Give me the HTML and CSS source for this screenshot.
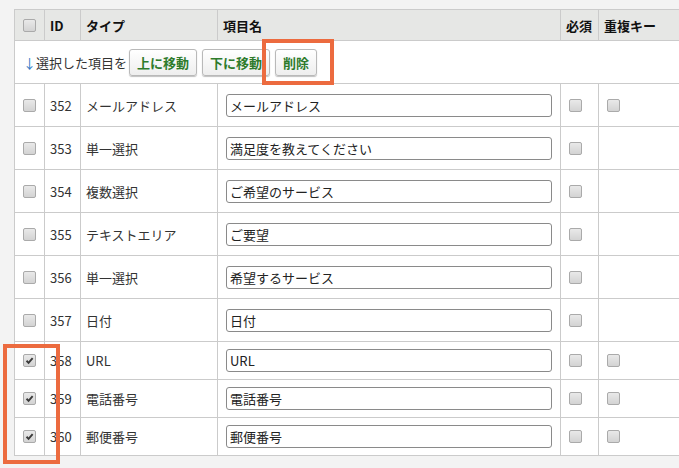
FILE: index.html
```html
<!DOCTYPE html>
<html>
    <head>
        <meta charset="utf-8">
        <title>項目一覧</title>
        <link rel="stylesheet" href="styles.css">
    </head>
    <body>
        <div id="page">
            <table id="items">
                <colgroup>
                    <col class="c-check">
                    <col class="c-id">
                    <col class="c-type">
                    <col class="c-name">
                    <col class="c-req">
                    <col class="c-dup">
                </colgroup>
                <thead>
                    <tr>
                        <th class="cell-check"><span class="cb"></span></th>
                        <th>ID</th>
                        <th>タイプ</th>
                        <th>項目名</th>
                        <th>必須</th>
                        <th>重複キー</th>
                    </tr>
                </thead>
                <tbody>
                    <tr class="toolbar">
                        <td colspan="6">
                            <div class="actions">
                                <span class="hint"><span class="arrow">↓</span>選択した項目を</span>
                                <button class="btn">上に移動</button>
                                <button class="btn">下に移動</button>
                                <button class="btn">削除</button>
                            </div>
                        </td>
                    </tr>
                    <tr>
                        <td class="cell-check"><span class="cb"></span></td>
                        <td>352</td>
                        <td>メールアドレス</td>
                        <td class="cell-name"><input class="name" type="text" value="メールアドレス"></td>
                        <td class="cell-check"><span class="cb"></span></td>
                        <td class="cell-check"><span class="cb"></span></td>
                    </tr>
                    <tr>
                        <td class="cell-check"><span class="cb"></span></td>
                        <td>353</td>
                        <td>単一選択</td>
                        <td class="cell-name"><input class="name" type="text" value="満足度を教えてください"></td>
                        <td class="cell-check"><span class="cb"></span></td>
                        <td></td>
                    </tr>
                    <tr>
                        <td class="cell-check"><span class="cb"></span></td>
                        <td>354</td>
                        <td>複数選択</td>
                        <td class="cell-name"><input class="name" type="text" value="ご希望のサービス"></td>
                        <td class="cell-check"><span class="cb"></span></td>
                        <td></td>
                    </tr>
                    <tr>
                        <td class="cell-check"><span class="cb"></span></td>
                        <td>355</td>
                        <td>テキストエリア</td>
                        <td class="cell-name"><input class="name" type="text" value="ご要望"></td>
                        <td class="cell-check"><span class="cb"></span></td>
                        <td></td>
                    </tr>
                    <tr>
                        <td class="cell-check"><span class="cb"></span></td>
                        <td>356</td>
                        <td>単一選択</td>
                        <td class="cell-name"><input class="name" type="text" value="希望するサービス"></td>
                        <td class="cell-check"><span class="cb"></span></td>
                        <td></td>
                    </tr>
                    <tr>
                        <td class="cell-check"><span class="cb"></span></td>
                        <td>357</td>
                        <td>日付</td>
                        <td class="cell-name"><input class="name" type="text" value="日付"></td>
                        <td class="cell-check"><span class="cb"></span></td>
                        <td></td>
                    </tr>
                    <tr class="short">
                        <td class="cell-check"><span class="cb checked"><svg viewBox="0 0 13 13"><path d="M3 6.8 L5.4 9.3 L10.2 3.6" /></svg></span></td>
                        <td>358</td>
                        <td>URL</td>
                        <td class="cell-name"><input class="name" type="text" value="URL"></td>
                        <td class="cell-check"><span class="cb"></span></td>
                        <td class="cell-check"><span class="cb"></span></td>
                    </tr>
                    <tr class="short">
                        <td class="cell-check"><span class="cb checked"><svg viewBox="0 0 13 13"><path d="M3 6.8 L5.4 9.3 L10.2 3.6" /></svg></span></td>
                        <td>359</td>
                        <td>電話番号</td>
                        <td class="cell-name"><input class="name" type="text" value="電話番号"></td>
                        <td class="cell-check"><span class="cb"></span></td>
                        <td class="cell-check"><span class="cb"></span></td>
                    </tr>
                    <tr class="short">
                        <td class="cell-check"><span class="cb checked"><svg viewBox="0 0 13 13"><path d="M3 6.8 L5.4 9.3 L10.2 3.6" /></svg></span></td>
                        <td>360</td>
                        <td>郵便番号</td>
                        <td class="cell-name"><input class="name" type="text" value="郵便番号"></td>
                        <td class="cell-check"><span class="cb"></span></td>
                        <td class="cell-check"><span class="cb"></span></td>
                    </tr>
                </tbody>
            </table>

            <!-- annotation frames drawn over the screenshot -->
            <div class="mark mark-delete"></div>
            <div class="mark mark-checks"></div>
        </div>
    </body>
</html>
```

FILE: styles.css
```css
* {
    padding: 0;
    margin: 0;
    box-sizing: border-box;
}

html, body {
    height: 100%;
    overflow: hidden;
    background-color: #f3f3f3;
}

body {
    font-family: "Noto Sans CJK JP", "Noto Sans", sans-serif;
    font-size: 13px;
    color: #333;
}

#page {
    position: relative;
    padding: 9px 0 0 14px;
}

#items {
    width: 700px;
    table-layout: fixed;
    border-collapse: collapse;
    background-color: #fff;
}

.c-check { width: 30px; }
.c-id { width: 36px; }
.c-type { width: 137px; }
.c-name { width: 343px; }
.c-req { width: 38px; }
.c-dup { width: 116px; }

#items th,
#items td {
    border: 1px solid #cbcbcb;
    padding: 0 5px;
    text-align: left;
    vertical-align: middle;
    white-space: nowrap;
    overflow: hidden;
}

#items th {
    height: 31px;
    background-color: #e6e7e5;
    color: #111;
    font-weight: 700;
}

#items td {
    height: 43px;
}

#items tr.short td {
    height: 38px;
}

#items .cell-check {
    padding: 0 8px;
    line-height: 0;
}

#items .cell-name {
    padding: 0 8px;
}

.cb {
    display: inline-block;
    width: 13px;
    height: 13px;
    border: 1px solid #aaa;
    border-radius: 2px;
    background: linear-gradient(#e9e9e9, #d3d3d3);
    vertical-align: middle;
}

.cb svg {
    display: block;
    width: 11px;
    height: 11px;
}

.cb svg path {
    fill: none;
    stroke: #3a3a3a;
    stroke-width: 2.2;
}

.name {
    display: block;
    width: 100%;
    height: 23px;
    padding: 0 3px;
    border: 1px solid #8a8a8a;
    border-radius: 3px;
    font-family: inherit;
    font-size: 13px;
    color: #222;
    background-color: #fff;
}

#items .toolbar td {
    padding: 0 8px;
}

.actions {
    display: flex;
    align-items: center;
    gap: 5px;
}

.hint {
    margin-right: -3px;
    color: #333;
}

.arrow {
    color: #2f7bc4;
}

.btn {
    height: 27px;
    padding: 0 7px;
    border: 1px solid #b9b9b9;
    border-radius: 3px;
    background: linear-gradient(#ffffff, #eeeeee);
    box-shadow: 0 1px 1px rgba(0,0,0,0.25);
    font-family: inherit;
    font-size: 13px;
    font-weight: 700;
    color: #2d7b2b;
}

.mark {
    position: absolute;
    border: 4px solid #ec6b3f;
}

.mark-delete {
    left: 262px;
    top: 39px;
    width: 72px;
    height: 46px;
}

.mark-checks {
    left: 3px;
    top: 344px;
    width: 57px;
    height: 120px;
}
```
